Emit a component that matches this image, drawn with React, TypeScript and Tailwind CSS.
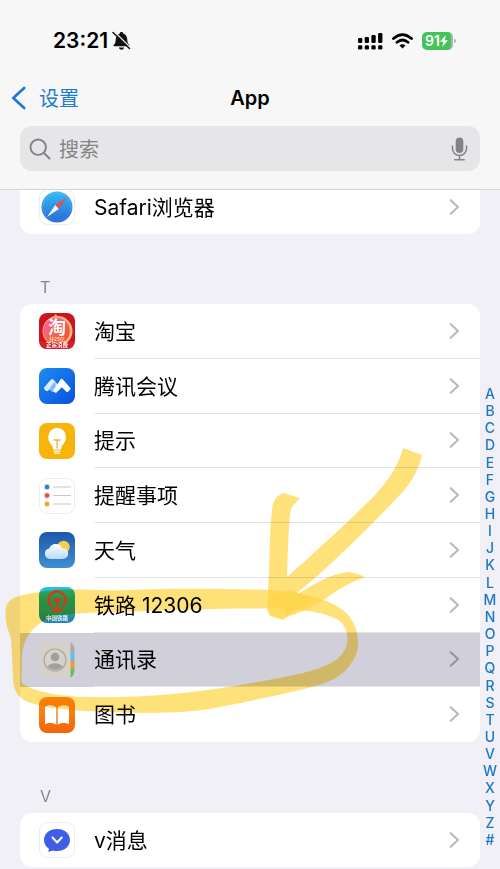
import type { ReactNode } from "react";

const letters = [..."ABCDEFGHIJKLMNOPQRSTUVWXYZ#"];

function Chevron({ dark = false }: { dark?: boolean }) {
  return (
    <svg width="12" height="18" viewBox="0 0 12 18" fill="none" className={dark ? "text-[#96959b]" : "text-[#b9b9bc]"} aria-hidden="true">
      <path d="M2.7 2.2 10 9l-7.300 6.800" stroke="currentColor" strokeWidth="2.1" strokeLinecap="round" strokeLinejoin="round" />
    </svg>
  );
}

function Tile({ children }: { children: ReactNode }) {
  return (
    <svg width="38" height="38" viewBox="0 0 38 38" className="shrink-0" aria-hidden="true">
      {children}
    </svg>
  );
}

const Plain = () => <rect x="1.5" y="1.5" width="35" height="35" rx="8" fill="#fff" stroke="#ececec" />;

const SafariIcon = () => (
  <Tile>
    <defs>
      <linearGradient id="saf" x1="0" y1="0" x2="0" y2="1">
        <stop offset="0" stopColor="#35bdf3" />
        <stop offset="1" stopColor="#2a68d6" />
      </linearGradient>
    </defs>
    <Plain />
    <circle cx="19" cy="19" r="15.5" fill="url(#saf)" />
    <circle cx="19" cy="19" r="13.8" fill="none" stroke="#fff" strokeWidth="1" strokeDasharray=".5 1.7" opacity=".45" />
    <path d="M29 9 17.3 17.1 20.7 20.9Z" fill="#ec4a4c" />
    <path d="M9 29 17.3 17.1 20.7 20.9Z" fill="#fff" />
  </Tile>
);

const TaobaoIcon = () => (
  <Tile>
    <defs>
      <linearGradient id="tb" x1="0" y1="0" x2="1" y2="1">
        <stop offset="0" stopColor="#f35fc0" />
        <stop offset=".5" stopColor="#f76453" />
        <stop offset="1" stopColor="#ef4a24" />
      </linearGradient>
    </defs>
    <rect x="1" y="1" width="36" height="36" rx="8" fill="#cc1520" />
    <path d="m16 6 1-4 4 3 4 2Z" fill="#f5b26c" />
    <circle cx="19.5" cy="19" r="15" fill="#f8bb82" />
    <circle cx="18.5" cy="19" r="13.3" fill="url(#tb)" />
    <text x="19" y="21.500" textAnchor="middle" fontSize="18" fontWeight="700" fill="#fff" className="font-['Noto_Sans_CJK_SC',sans-serif]">淘</text>
    <path d="M2 29.500q17 1.500 34 0v.5q0 7-7 7H9q-7 0-7-7Z" fill="#d3212a" />
    <text x="19" y="28.500" textAnchor="middle" fontSize="5" fontWeight="700" fill="#ffe3b8" className="font-['Noto_Sans_CJK_SC',sans-serif]">分25亿</text>
    <text x="19" y="35" textAnchor="middle" fontSize="5.500" fontWeight="700" fill="#fff" className="font-['Noto_Sans_CJK_SC',sans-serif]">正宗消费</text>
  </Tile>
);

const MeetingIcon = () => (
  <Tile>
    <defs>
      <linearGradient id="mt" x1="0" y1="0" x2="1" y2="1">
        <stop offset="0" stopColor="#1d8df5" />
        <stop offset="1" stopColor="#0950dc" />
      </linearGradient>
    </defs>
    <rect x="1" y="1" width="36" height="36" rx="8" fill="url(#mt)" />
    <path d="M13 12.600q1.200-1.200 2.400 0l5 5.800-4.600 6.200q-.8.800-1.600 0l-2.600-2.400-1.700 1.600q-1 .8-2 0l-1.600-1.600q-.8-1 0-2Z" fill="#d9ebff" />
    <path d="m10.800 22.400 6.500-8.300.6 8-1.900 2.600q-.9.800-1.800 0Z" fill="#7ebafb" />
    <path d="M22.500 12.400q1.200-1.200 2.400 0l7.300 8.300q.8 1 0 1.900l-2 2q-1 1-2 0l-4.400-4.300-5 5q-1.100 1-2.200 0l-1.600-1.600Z" fill="#fff" />
  </Tile>
);

const TipsIcon = () => (
  <Tile>
    <rect x="1" y="1" width="36" height="36" rx="8" fill="#f7b50c" />
    <path d="M15.200 27.600c-.1-5-5-6.300-5-12.900a8.900 8.900 0 0 1 17.800 0c0 6.600-4.900 7.900-5 12.900Z" fill="#fff" />
    <path d="M15.700 29.100h6.800M16.300 31.200h5.600" stroke="#fff" strokeWidth="1.300" />
    <path d="M15.600 18h7M19.100 18v8.500" stroke="#eeb23a" strokeWidth="1.300" fill="none" />
  </Tile>
);

const RemindersIcon = () => (
  <Tile>
    <Plain />
    {[{ y: 10, c: "#2683c8" }, { y: 18.500, c: "#df4d4c" }, { y: 27, c: "#f0a334" }].map(({ y, c }) => (
      <g key={y}>
        <circle cx="9" cy={y} r="3.200" fill={c} opacity=".25" />
        <circle cx="9" cy={y} r="2.200" fill={c} />
        <path d={`M15 ${y}h18`} stroke="#c9c9cb" />
      </g>
    ))}
  </Tile>
);

const WeatherIcon = () => (
  <Tile>
    <defs>
      <linearGradient id="we" x1="0" y1="0" x2="0" y2="1">
        <stop offset="0" stopColor="#1d58a9" />
        <stop offset="1" stopColor="#3e8fd2" />
      </linearGradient>
      <linearGradient id="cl" x1="0" y1="0" x2="0" y2="1">
        <stop offset="0" stopColor="#fff" />
        <stop offset="1" stopColor="#b7daf5" />
      </linearGradient>
    </defs>
    <rect x="1" y="1" width="36" height="36" rx="8" fill="url(#we)" />
    <circle cx="25.500" cy="16" r="6.200" fill="#f8cc4e" />
    <path d="M12 28a5.300 5.300 0 0 1-.8-10.500 7 7 0 0 1 13-.2q5.800 0 6 5.300-.3 5.400-6 5.400Z" fill="url(#cl)" />
  </Tile>
);

const RailwayIcon = () => (
  <Tile>
    <defs>
      <linearGradient id="rw" x1="0" y1="0" x2="0" y2="1">
        <stop offset="0" stopColor="#29c4e4" />
        <stop offset=".35" stopColor="#24a898" />
        <stop offset=".7" stopColor="#299b94" />
        <stop offset="1" stopColor="#267dc0" />
      </linearGradient>
    </defs>
    <rect x="1" y="1" width="36" height="36" rx="8" fill="url(#rw)" />
    <path d="M13.300 20.500a8.600 8.600 0 1 1 11.400 0" fill="none" stroke="#cf4434" strokeWidth="2.600" />
    <path d="M16.200 4h5.600v3h-5.600ZM15.300 12h7.400v2.800l-2.500 2v4.500l4.500 2v2.200H13.300v-2.200l4.500-2v-4.500l-2.500-2Z" fill="#cf4434" />
    <text x="19" y="33.800" textAnchor="middle" fontSize="5.500" fontWeight="700" fill="#e9fbff" className="font-['Noto_Sans_CJK_SC',sans-serif]">中国铁路</text>
  </Tile>
);

const ContactsIcon = () => (
  <Tile>
    <defs>
      <clipPath id="avatar"><circle cx="17" cy="19" r="10" /></clipPath>
      <clipPath id="tabs"><path d="M32.500 1.500q4 2 4 8v19q0 6-4 8Z" /></clipPath>
    </defs>
    <rect x="1" y="1" width="34" height="36" rx="8" fill="#d6d2ca" />
    <g clipPath="url(#tabs)">
      <path d="M32 1h6v10h-6Z" fill="#aaa9a6" />
      <path d="M32 11h6v9h-6Z" fill="#69b9eb" />
      <path d="M32 20h6v8h-6Z" fill="#ee9933" />
      <path d="M32 28h6v10h-6Z" fill="#66bd69" />
    </g>
    <circle cx="17" cy="19" r="11" fill="none" stroke="#aaa8a4" strokeWidth="1.200" />
    <g clipPath="url(#avatar)" fill="#a19f9b">
      <circle cx="17" cy="16" r="4.300" />
      <ellipse cx="17" cy="28" rx="8.500" ry="5.700" />
    </g>
  </Tile>
);

const BooksIcon = () => (
  <Tile>
    <defs>
      <linearGradient id="bk" x1="0" y1="0" x2="0" y2="1">
        <stop offset="0" stopColor="#fa9413" />
        <stop offset="1" stopColor="#f26507" />
      </linearGradient>
    </defs>
    <rect x="1" y="1" width="36" height="36" rx="8" fill="url(#bk)" />
    <path d="M18.300 11.500c-3-3-8.500-3-11.300-.8v17.600c3-2 8.300-1.900 11.300.4ZM19.700 11.500c3-3 8.500-3 11.300-.8v17.600c-3-2-8.300-1.900-11.300.4Z" fill="#fff" />
  </Tile>
);

const MessageIcon = () => (
  <Tile>
    <Plain />
    <path d="M19 8c7.500 0 13 4.500 13 11s-5.500 11-13 11c-1.700 0-3.200-.2-4.500-.6-1.500 1-3.500 1.200-4.500 1 .8-.7 1-1.800.7-2.800C7.800 25.500 6 22.600 6 19 6 12.500 11.500 8 19 8Z" fill="#405de8" />
    <path d="m14.500 16.500 4.600 5 4.600-5" fill="none" stroke="#fff" strokeWidth="2" strokeLinecap="round" strokeLinejoin="round" />
  </Tile>
);

type Item = { name: string; icon: ReactNode; selected?: boolean };

const sectionT: Item[] = [
  { name: "淘宝", icon: <TaobaoIcon /> },
  { name: "腾讯会议", icon: <MeetingIcon /> },
  { name: "提示", icon: <TipsIcon /> },
  { name: "提醒事项", icon: <RemindersIcon /> },
  { name: "天气", icon: <WeatherIcon /> },
  { name: "铁路 12306", icon: <RailwayIcon /> },
  { name: "通讯录", icon: <ContactsIcon />, selected: true },
  { name: "图书", icon: <BooksIcon /> },
];

function Row({ item, divided }: { item: Item; divided: boolean }) {
  return (
    <li className={item.selected ? "bg-[#d1d0da]" : ""}>
      <a href="#app" className="flex h-full items-center pl-[18px]">
        {item.icon}
        <span className={`ml-[18px] flex h-full grow items-center justify-between border-b pr-5 ${divided ? "border-[#e4e4e6]" : "border-transparent"}`}>
          <span className="pt-0.5 text-[21px] leading-7">{item.name}</span>
          <Chevron dark={item.selected} />
        </span>
      </a>
    </li>
  );
}

function Scribble() {
  return (
    <svg width="500" height="869" viewBox="0 0 500 869" className="pointer-events-none absolute top-0 left-0 mix-blend-multiply" aria-hidden="true">
      <g fill="#ffd64a" fillOpacity=".74">
        <path fillRule="evenodd" d="M6 608C8 597 20 595 40 592C65 587 90 591 130 590C180 588 230 589 270 590C305 592 335 600 349 616C361 632 361 652 350 665C339 680 322 685 300 690C270 697 245 702 220 707C190 713 155 714 110 712C75 711 38 708 24 700C15 694 13 687 13 675L11 638C7 628 4 617 6 608ZM45 620C28 630 22 644 22 660C22 672 20 680 23 684C36 692 60 697 90 697C140 698 185 694 235 686L280 678C310 672 333 666 342 654C350 645 349 631 341 622C329 613 312 611 285 609C235 607 160 611 110 612C80 613 60 613 45 620Z" />
        <path d="M267 610 269 570C270 545 270 520 273 503Q277 495 283 493L300 498 291 508C288 530 288 553 287 577C310 557 345 525 373 497C390 479 397 468 403 448L422 455C418 474 407 488 396 499C370 526 335 562 297 593L296 600Q294 611 283 620L270 616Z" />
        <path d="M284 603C305 590 325 575 347 572Q358 573 365 577C346 584 336 591 322 601C310 608 298 614 286 617Z" />
        <path d="M268 596 293 590Q304 598 322 598 300 607 284 619L270 615Z" fillOpacity=".5" />
      </g>
    </svg>
  );
}

export default function App() {
  return (
    <div className="relative flex min-h-screen flex-col overflow-hidden bg-[#f1f0f6] font-[Inter,'Noto_Sans_CJK_SC',sans-serif] text-black">
      <header className="z-10 border-b border-[#d5d5d7] bg-[#f7f7f7] pt-[25px] pb-[18px]">
        <div className="flex h-8 items-center justify-between pr-[44px] pl-[53px]">
          <div className="flex items-center gap-1">
            <time className="text-[21px] leading-8 font-semibold">23:21</time>
            <svg width="19" height="20" viewBox="0 0 19 20" role="img" aria-label="静音">
              <path d="M9.500 1c1.200 0 1.700.7 1.900 1.700 2.600.8 3.800 3 3.900 6 .1 3 .7 4 2 5.300.4.500.2 1.200-.5 1.200H2.200c-.7 0-.9-.7-.5-1.200 1.400-1.300 1.900-2.500 2-5.300.1-3 1.300-5.200 3.900-6C7.800 1.700 8.300 1 9.500 1ZM6.800 16.500h5.400q-.5 2.300-2.700 2.300t-2.700-2.300Z" fill="#111" />
              <path d="m2.500.8 16 16" stroke="#f7f7f7" strokeWidth="1.300" />
              <path d="m1 1.500 16.500 16" stroke="#111" strokeWidth="1.500" strokeLinecap="round" />
            </svg>
          </div>
          <div className="flex items-center gap-[9px]">
            <svg width="25" height="18" viewBox="0 0 25 18" aria-hidden="true">
              <rect x="0" y="6" width="4.300" height="5" rx="1.300" />
              <rect x="6.700" y="5" width="4.300" height="6" rx="1.300" />
              <rect x="13.400" y="3" width="4.300" height="8" rx="1.300" />
              <rect x="20.100" y="1" width="4.300" height="10" rx="1.300" />
              {[0, 6.700, 13.400, 20.100].map((x) => (
                <rect key={x} x={x} y="13.200" width="4.300" height="4.300" rx="1.300" />
              ))}
            </svg>
            <svg width="21" height="16" viewBox="0 0 21 16" aria-hidden="true">
              <path d="M1.500 5.500q9-7.800 18 0M5 9.300q5.500-4.600 11 0" fill="none" stroke="#000" strokeWidth="2.800" strokeLinecap="round" />
              <path d="M10.500 15.600 7.500 12.500q3-2.300 6 0Z" />
            </svg>
            <div className="flex items-center gap-px">
              <div className="flex h-[18px] w-[31px] items-center justify-center rounded-[5px] border-r-2 border-[#a8b5aa] bg-[#43c35c] text-white">
                <span className="text-[14px] leading-4 font-semibold">91</span>
                <svg width="8" height="12" viewBox="0 0 8 12" fill="#fff" aria-hidden="true"><path d="M5.800 0 0 6.800h3.400L2.200 12 8 5.200H4.600Z" /></svg>
              </div>
              <span className="h-1 w-[2px] rounded-r-full bg-[#b5b5b5]" />
            </div>
          </div>
        </div>
        <div className="mt-[23px] grid h-9 grid-cols-3 items-center">
          <a href="#settings" className="flex items-center gap-3 pl-[11px] text-[#1d7ad0]">
            <svg width="16" height="24" viewBox="0 0 16 24" fill="none" aria-hidden="true">
              <path d="M13.200 2 2.300 12l10.900 10" stroke="currentColor" strokeWidth="2.700" strokeLinecap="round" strokeLinejoin="round" />
            </svg>
            <span className="pt-0.5 text-[20px] leading-7">设置</span>
          </a>
          <h1 className="text-center text-[20px] leading-7 font-semibold">App</h1>
        </div>
        <label className="mx-5 mt-[10px] flex h-[45px] items-center gap-2 rounded-xl bg-[#e6e6e8] pr-3 pl-[9px] text-[#838386]">
          <svg width="22" height="22" viewBox="0 0 22 22" fill="none" stroke="currentColor" strokeWidth="1.900" strokeLinecap="round" aria-hidden="true">
            <circle cx="9.200" cy="9.200" r="7.700" />
            <path d="m15 15 5.500 5.500" />
          </svg>
          <input aria-label="搜索" placeholder="搜索" className="min-w-0 grow bg-transparent pt-0.5 text-[20px] leading-7 outline-none placeholder:text-[#838386]" />
          <svg width="17" height="24" viewBox="0 0 17 24" aria-hidden="true">
            <rect x="4.700" y=".5" width="7.600" height="15.500" rx="3.800" fill="currentColor" />
            <path d="M1.500 9v2.500a7 7 0 0 0 14 0V9M8.500 18.500v4M3.800 22.700h9.400" fill="none" stroke="currentColor" strokeWidth="1.500" strokeLinecap="round" />
          </svg>
        </label>
      </header>

      <div className="flex">
        <main className="min-w-0 grow pl-5">
          <ul className="-mt-[10px] grid h-[54px] overflow-hidden rounded-xl bg-white">
            <Row item={{ name: "Safari浏览器", icon: <SafariIcon /> }} divided={false} />
          </ul>
          <h2 className="mt-[43px] pl-5 text-[16px] leading-5 text-[#858589]">T</h2>
          <ul className="mt-[7px] grid h-[438px] auto-rows-fr overflow-hidden rounded-xl bg-white">
            {sectionT.map((item, i) => (
              <Row key={item.name} item={item} divided={i < sectionT.length - 1} />
            ))}
          </ul>
          <h2 className="mt-[44px] pl-5 text-[16px] leading-5 text-[#858589]">V</h2>
          <ul className="mt-[7px] grid h-[54px] overflow-hidden rounded-xl bg-white">
            <Row item={{ name: "v消息", icon: <MessageIcon /> }} divided={false} />
          </ul>
        </main>
        <nav aria-label="索引" className="mt-[196px] grid h-[463px] w-5 shrink-0 auto-rows-fr text-center text-[14px] leading-4 font-medium text-[#1d78c4]">
          {letters.map((l) => (
            <a key={l} href={l === "#" ? "#other" : `#${l}`}>{l}</a>
          ))}
        </nav>
      </div>
      <Scribble />
    </div>
  );
}
